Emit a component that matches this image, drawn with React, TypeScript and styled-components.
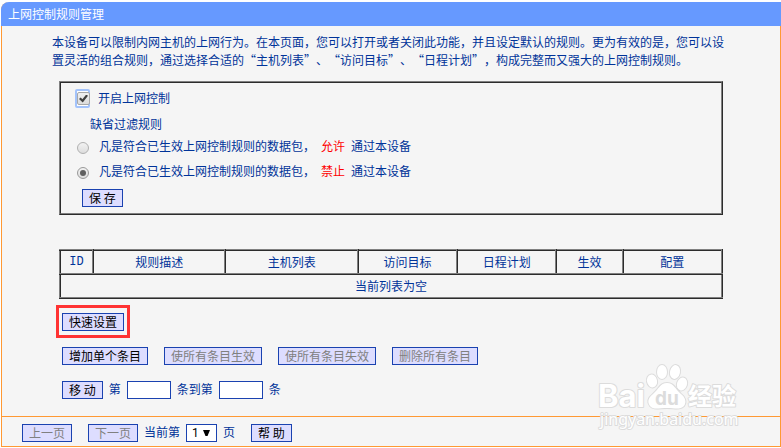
import React, { useState } from "react";
import styled, { createGlobalStyle } from "styled-components";

const GlobalStyle = createGlobalStyle`
  * { box-sizing: border-box; }
  body {
    margin: 0;
    background: #fff;
    color: #003399;
    font: 12px/18px "Noto Sans CJK SC", sans-serif;
    text-spacing-trim: space-all;
  }
  button, input, select { font: inherit; margin: 0; }
`;

const Page = styled.main`
  padding: 2px 0 1px 1px;
`;

const Panel = styled.section`
  position: relative;
  background: #f5f5f5;
  border: 1px solid #ff9933;
  border-top: 0;
  border-top-left-radius: 8px;
`;

const TitleBar = styled.h1`
  margin: 0 -1px;
  padding: 0 7px;
  height: 24px;
  background: #6699ff;
  border-top-left-radius: 8px;
  color: #fff;
  font-size: 12px;
  font-weight: 400;
  line-height: 24px;
`;

const Intro = styled.p`
  margin: 0;
  padding: 7px 54px 0 50px;
`;

const Body = styled.div`
  padding: 12px 57px 17px;
`;

const RuleBox = styled.div`
  display: flex;
  flex-direction: column;
  align-items: flex-start;
  padding: 6px 14px;
  border: 2px ridge #808080;
`;

const CheckOption = styled.label`
  display: flex;
  align-items: center;
  gap: 8px;
  height: 19px;
`;

const RadioOption = styled.label`
  display: flex;
  align-items: center;
  gap: 10px;
  height: 25px;
`;

const OptionText = styled.span`
  padding-bottom: 2px;
`;

const CheckBox = styled.input`
  appearance: none;
  width: 15px;
  height: 19px;
  padding: 0;
  border: 2px solid #a3c3fb;
  border-radius: 2px;
  background: #fff;
  display: grid;
  place-items: center;
  &::before {
    content: "";
    width: 11px;
    height: 11px;
    border: 1px solid #a8a8a8;
    border-radius: 2px;
    background: linear-gradient(#f0f0f0, #dcdcdc);
    grid-area: 1 / 1;
  }
  &:checked::after {
    content: "";
    grid-area: 1 / 1;
    width: 9px;
    height: 8px;
    background: #404040;
    clip-path: polygon(0 55%, 18% 38%, 38% 58%, 80% 0, 100% 16%, 42% 100%);
  }
`;

const Radio = styled.input`
  appearance: none;
  flex: none;
  width: 12px;
  height: 12px;
  margin: 2px 0 0 2px;
  border: 1px solid #b0b0b0;
  border-radius: 50%;
  background: linear-gradient(#f2f2f2, #dddddd);
  display: grid;
  place-items: center;
  &:checked { border-color: #999; }
  &:checked::after {
    content: "";
    width: 6px;
    height: 6px;
    border-radius: 50%;
    background: #606060;
  }
`;

const Subtitle = styled.div`
  padding: 7px 0 0 15px;
  height: 26px;
`;

const Verdict = styled.span`
  margin: 0 6px;
  color: #ff0000;
`;

const Button = styled.button`
  height: 18px;
  padding: 0 6px;
  border: 1px solid #1a42b0;
  background: #ddddff;
  color: #000;
  line-height: 16px;
  white-space: nowrap;
  &:disabled { color: #808080; }
`;

const SaveRow = styled.div`
  padding: 5px 7px 0;
  display: flex;
`;

const Table = styled.table`
  width: 100%;
  margin-top: 34px;
  border-collapse: collapse;
  table-layout: fixed;
`;

const Cell = styled.td`
  height: 24px;
  padding: 0;
  border: 2px ridge #808080;
  text-align: center;
`;

const HeadCell = styled(Cell).attrs({ as: "th", scope: "col" })<{ $width: number; $mono?: boolean }>`
  width: ${(p) => p.$width}%;
  font-weight: 400;
  font-family: ${(p) => (p.$mono ? '"Liberation Mono", monospace' : "inherit")};
`;

const Highlight = styled.div`
  width: fit-content;
  margin: 6px 0 0 -3px;
  padding: 5px 3px 4px;
  border: 3px solid #ff3333;
  display: flex;
`;

const Row = styled.div<{ $gap: number; $top: number }>`
  display: flex;
  flex-wrap: wrap;
  align-items: center;
  gap: ${(p) => p.$gap}px;
  margin-top: ${(p) => p.$top}px;
  padding-left: 3px;
`;

const NumberBox = styled.input`
  width: 44px;
  height: 18px;
  padding: 0 3px;
  border: 1px solid #1a42b0;
  background: #fff;
  color: #000;
`;

const Caption = styled.label`
  padding-bottom: 3px;
  line-height: 15px;
`;

const Footer = styled.footer`
  display: flex;
  flex-wrap: wrap;
  align-items: center;
  gap: 16px;
  padding: 7px 20px 4px;
  border-top: 1px solid #ff9933;
`;

const Pager = styled.div`
  display: flex;
  align-items: center;
  gap: 6px;
  margin-left: -10px;
`;

const SelectWrap = styled.span`
  display: inline-grid;
  align-items: center;
  width: 31px;
  height: 18px;
  border: 1px solid #1a42b0;
  background: #fff;
  color: #000;
`;

const Select = styled.select`
  grid-area: 1 / 1;
  appearance: none;
  width: 100%;
  height: 16px;
  padding: 0 0 0 5px;
  border: 0;
  background: transparent;
  color: #000;
  font: 12px/16px Roboto, sans-serif;
`;

const Arrow = styled.svg`
  grid-area: 1 / 1;
  justify-self: end;
  margin-right: 6px;
  pointer-events: none;
`;

const Watermark = styled.div`
  position: absolute;
  right: 41px;
  bottom: 12px;
  width: 142px;
  pointer-events: none;
  svg { display: block; }
`;

const columns = [
  { name: "ID", width: 5, mono: true },
  { name: "规则描述", width: 20 },
  { name: "主机列表", width: 20 },
  { name: "访问目标", width: 15 },
  { name: "日程计划", width: 15 },
  { name: "生效", width: 10 },
  { name: "配置", width: 15 },
];

function WatermarkLogo() {
  return (
    <svg width="142" height="72" viewBox="0 0 142 72" aria-hidden="true">
      <g fill="#fff" stroke="#dcdcdc" strokeWidth="2" paintOrder="stroke" strokeLinejoin="round">
        <text x="1" y="45" fontFamily="Inter, sans-serif" fontWeight="700" fontSize="31">Bai</text>
        <ellipse cx="55" cy="19" rx="5" ry="6.5" transform="rotate(-12 55 19)" />
        <ellipse cx="65" cy="10" rx="5" ry="7" />
        <ellipse cx="78" cy="10" rx="5" ry="7" transform="rotate(12 78 10)" />
        <ellipse cx="85" cy="22" rx="5" ry="6.5" transform="rotate(18 85 22)" />
        <path d="M70 21C63 21 62 27 56 32C51 36 50 40 53 44C56 48 62 46 70 46C78 46 83 48 87 44C90 40 88 35 84 32C78 27 77 21 70 21Z" />
        <text x="58" y="43" fontFamily="Inter, sans-serif" fontWeight="700" fontSize="19" fill="#dcdcdc" stroke="none">du</text>
        <text x="91" y="43" fontFamily="Noto Sans CJK SC, sans-serif" fontWeight="700" fontSize="24">经验</text>
        <text x="3" y="63" fontFamily="Noto Sans, sans-serif" fontSize="16">jingyan.baidu.com</text>
      </g>
    </svg>
  );
}

export default function App() {
  const [enabled, setEnabled] = useState(true);
  const [policy, setPolicy] = useState("deny");

  return (
    <Page>
      <GlobalStyle />
      <Panel>
        <TitleBar>上网控制规则管理</TitleBar>
        <Intro>
          本设备可以限制内网主机的上网行为。在本页面，您可以打开或者关闭此功能，并且设定默认的规则。更为有效的是，您可以设置灵活的组合规则，通过选择合适的“主机列表”、“访问目标”、“日程计划”，构成完整而又强大的上网控制规则。
        </Intro>
        <Body>
          <RuleBox>
            <CheckOption>
              <CheckBox type="checkbox" checked={enabled} onChange={(e) => setEnabled(e.target.checked)} />
              <OptionText>开启上网控制</OptionText>
            </CheckOption>
            <Subtitle>缺省过滤规则</Subtitle>
            <RadioOption>
              <Radio type="radio" name="policy" checked={policy === "allow"} onChange={() => setPolicy("allow")} />
              <OptionText>凡是符合已生效上网控制规则的数据包，<Verdict>允许</Verdict>通过本设备</OptionText>
            </RadioOption>
            <RadioOption>
              <Radio type="radio" name="policy" checked={policy === "deny"} onChange={() => setPolicy("deny")} />
              <OptionText>凡是符合已生效上网控制规则的数据包，<Verdict>禁止</Verdict>通过本设备</OptionText>
            </RadioOption>
            <SaveRow>
              <Button type="button">保 存</Button>
            </SaveRow>
          </RuleBox>

          <Table>
            <thead>
              <tr>
                {columns.map((c) => (
                  <HeadCell key={c.name} $width={c.width} $mono={c.mono}>{c.name}</HeadCell>
                ))}
              </tr>
            </thead>
            <tbody>
              <tr>
                <Cell colSpan={columns.length}>当前列表为空</Cell>
              </tr>
            </tbody>
          </Table>

          <Highlight>
            <Button type="button">快速设置</Button>
          </Highlight>
          <Row $gap={16} $top={9}>
            <Button type="button">增加单个条目</Button>
            <Button type="button" disabled>使所有条目生效</Button>
            <Button type="button" disabled>使所有条目失效</Button>
            <Button type="button" disabled>删除所有条目</Button>
          </Row>
          <Row $gap={6} $top={16}>
            <Button type="button">移 动</Button>
            <Caption htmlFor="from">第</Caption>
            <NumberBox id="from" type="text" />
            <Caption htmlFor="to">条到第</Caption>
            <NumberBox id="to" type="text" />
            <Caption htmlFor="to">条</Caption>
          </Row>
        </Body>
        <Footer>
          <Button type="button" disabled>上一页</Button>
          <Button type="button" disabled>下一页</Button>
          <Pager>
            <Caption htmlFor="page">当前第</Caption>
            <SelectWrap>
              <Select id="page" defaultValue="1">
                <option value="1">1</option>
              </Select>
              <Arrow width="7" height="6" viewBox="0 0 7 6">
                <path d="M0 0H7L4.500 6H2.500Z" fill="#000" />
              </Arrow>
            </SelectWrap>
            <Caption htmlFor="page">页</Caption>
          </Pager>
          <Button type="button">帮 助</Button>
        </Footer>
        <Watermark>
          <WatermarkLogo />
        </Watermark>
      </Panel>
    </Page>
  );
}
